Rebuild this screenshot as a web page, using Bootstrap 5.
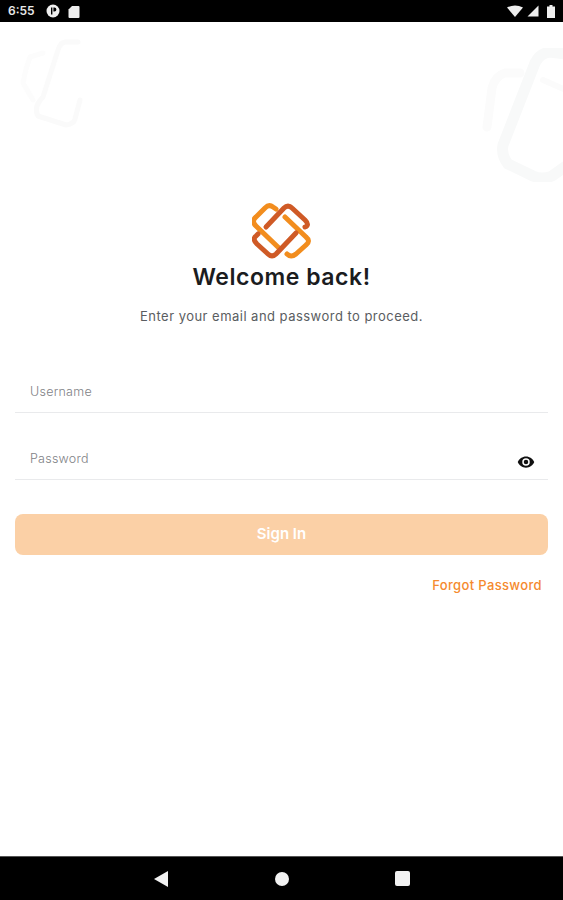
<!DOCTYPE html>
<html lang="en">
<head>
  <meta charset="UTF-8">
  <title>Sign In</title>
  <link href="https://cdn.jsdelivr.net/npm/bootstrap@5.3.0/dist/css/bootstrap.min.css" rel="stylesheet">
  <style>
    html, body { height: 100%; }
    body { font-family: Inter, "Liberation Sans", sans-serif; background: #fff; overflow: hidden; }
    .app-shell { height: 900px; }
    .status-bar { height: 22px; background: #000; color: #e8e8e8; font-size: 12px; font-weight: 600; padding: 0 8px; }
    .status-time { width: 34px; }
    .screen { position: relative; padding: 181px 15px 0; }
    .bg-shape { position: absolute; fill: none; }
    .bg-left { left: 18px; top: 14px; }
    .bg-right { left: 480px; top: 26px; }
    .brand-logo { display: block; margin: 0 auto; }
    .welcome-title { font-size: 23px; font-weight: 600; color: #1b1c1e; line-height: 28px; margin: 3px 0 0; letter-spacing: .55px; }
    .welcome-sub { font-size: 13px; color: #5a5d61; line-height: 18px; margin: 16px 0 0; letter-spacing: .47px; }
    .login-form { margin-top: 42px; }
    .line-field { position: relative; height: 46px; margin-bottom: 21px; border-bottom: 1px solid #e9eaec; }
    .line-field .form-control { border: 0; border-radius: 0; background: transparent; box-shadow: none; height: 45px; padding: 4px 40px 0 15px; font-size: 12.500px; font-weight: 300; letter-spacing: .25px; }
    .line-field .form-control::placeholder { color: #7f8286; }
    .eye-btn { position: absolute; right: 13px; top: 19px; line-height: 0; }
    .signin-btn, .signin-btn:disabled { display: block; width: 100%; height: 41px; margin-top: 34px; background: #fbd0a6; border: 0; border-radius: 8px; color: #fff; font-size: 15px; font-weight: 600; opacity: 1; }
    .forgot-link { display: block; margin: 21px 6px 0 0; font-size: 13px; font-weight: 500; letter-spacing: .35px; line-height: 18px; color: #f58a2e; text-decoration: none; text-align: right; }
    .nav-bar { height: 44px; background: #000; border-top: 1px solid #555; }
    .nav-gap-a { margin-left: 107px; }
    .nav-gap-b { margin-left: 106px; }
  </style>
</head>
<body>
  <div class="app-shell d-flex flex-column">

    <!-- Status bar -->
    <div class="status-bar d-flex align-items-center flex-shrink-0">
      <span class="status-time">6:55</span>
      <svg class="ms-1" width="14" height="14" viewBox="0 0 14 14"><circle cx="7" cy="7" r="6.500" fill="#eee"/><path d="M5 3.500h1.400v7H5zM7.400 3.500h1a2 2 0 0 1 0 4h-1z" fill="#000"/></svg>
      <svg class="ms-2" width="12" height="13" viewBox="0 0 12 13"><path d="M4 1h6.500a1 1 0 0 1 1 1v10a1 1 0 0 1-1 1h-9a1 1 0 0 1-1-1V4.500z" fill="#eee"/></svg>
      <div class="ms-auto d-flex align-items-center">
        <svg width="16" height="12" viewBox="0 0 16 12"><path d="M0 2.500Q8 -1.500 16 2.500L8 12z" fill="#eee"/></svg>
        <svg class="ms-1" width="12" height="12" viewBox="0 0 12 12"><path d="M11.500 0.500V11.500H0.500z" fill="#eee"/></svg>
        <svg class="ms-2" width="8" height="13" viewBox="0 0 8 13"><path d="M2.500 0h3v1.500H8V13H0V1.500h2.500z" fill="#eee"/></svg>
      </div>
    </div>

    <!-- Login screen -->
    <div class="screen flex-grow-1">
      <!-- faint background marks, coordinates are page pixels -->
      <svg class="bg-shape bg-left" width="66" height="94" viewBox="18 36 66 94" stroke-linecap="round" stroke-linejoin="round">
        <path d="M78 42H65Q60 43 58 50L43 97Q33 107 38 116L66 125Q74 124 75 119L80 100" stroke="#fafafa" stroke-width="5"/>
        <path d="M43 53 30 57Q25 70 23 83L33 100" stroke="#fcfcfc" stroke-width="5"/>
      </svg>
      <svg class="bg-shape bg-right" width="83" height="134" viewBox="480 48 83 134" stroke-linecap="round" stroke-linejoin="round">
        <path d="M566 54 550 52Q540 53 535 63L503 145Q501 155 508 164L533 176Q542 180 552 176L566 166" stroke="#f8f9f9" stroke-width="11"/>
        <path d="M520 73 505 73Q495 76 492 88L487 127" stroke="#fbfbfb" stroke-width="9"/>
        <path d="M543 80 566 90" stroke="#fbfbfb" stroke-width="6"/>
      </svg>

      <svg class="brand-logo" width="59" height="57" viewBox="8 8 59 57" fill="none" stroke-width="5" stroke-linecap="round" stroke-linejoin="round">
        <path d="M32 14 29 12Q25 9 21 13L12 22Q7 26 12 31L36 54" stroke="#f28d1e"/>
        <path d="M41 22 62 42Q67 46 62 50L52 59Q47 63 43 59" stroke="#f28d1e"/>
        <path d="M22 32 40 13Q44 9 48 13L61 25Q66 30 61 32" stroke="#cf5a26"/>
        <path d="M52 38 32 59Q28 63 24 59L13 49Q8 44 12 41L14 39" stroke="#cf5a26"/>
      </svg>
      <h1 class="welcome-title text-center">Welcome back!</h1>
      <p class="welcome-sub text-center">Enter your email and password to proceed.</p>

      <form class="login-form">
        <div class="line-field">
          <input type="text" class="form-control" placeholder="Username">
        </div>
        <div class="line-field">
          <input type="password" class="form-control" placeholder="Password">
          <span class="eye-btn">
            <svg width="18" height="18" viewBox="0 0 24 24"><path d="M12 4.500C7 4.500 2.730 7.610 1 12c1.730 4.390 6 7.500 11 7.500s9.270-3.110 11-7.500c-1.730-4.390-6-7.500-11-7.500zM12 17a5 5 0 1 1 0-10 5 5 0 0 1 0 10zm0-8a3 3 0 1 0 0 6 3 3 0 0 0 0-6z" fill="#111"/></svg>
          </span>
        </div>
        <button type="button" class="btn signin-btn" disabled>Sign In</button>
        <a href="#" class="forgot-link">Forgot Password</a>
      </form>
    </div>

    <!-- Navigation bar -->
    <div class="nav-bar d-flex flex-shrink-0 align-items-center justify-content-center">
      <svg width="14" height="16" viewBox="0 0 14 16"><path d="M14 0V16L0 8z" fill="#f2f2f2"/></svg>
      <svg class="nav-gap-a" width="14" height="14" viewBox="0 0 14 14"><circle cx="7" cy="7" r="7" fill="#f2f2f2"/></svg>
      <svg class="nav-gap-b" width="15" height="15" viewBox="0 0 15 15"><rect width="15" height="15" rx="2" fill="#f2f2f2"/></svg>
    </div>
  </div>

  <script src="https://cdn.jsdelivr.net/npm/bootstrap@5.3.0/dist/js/bootstrap.bundle.min.js"></script>
</body>
</html>
